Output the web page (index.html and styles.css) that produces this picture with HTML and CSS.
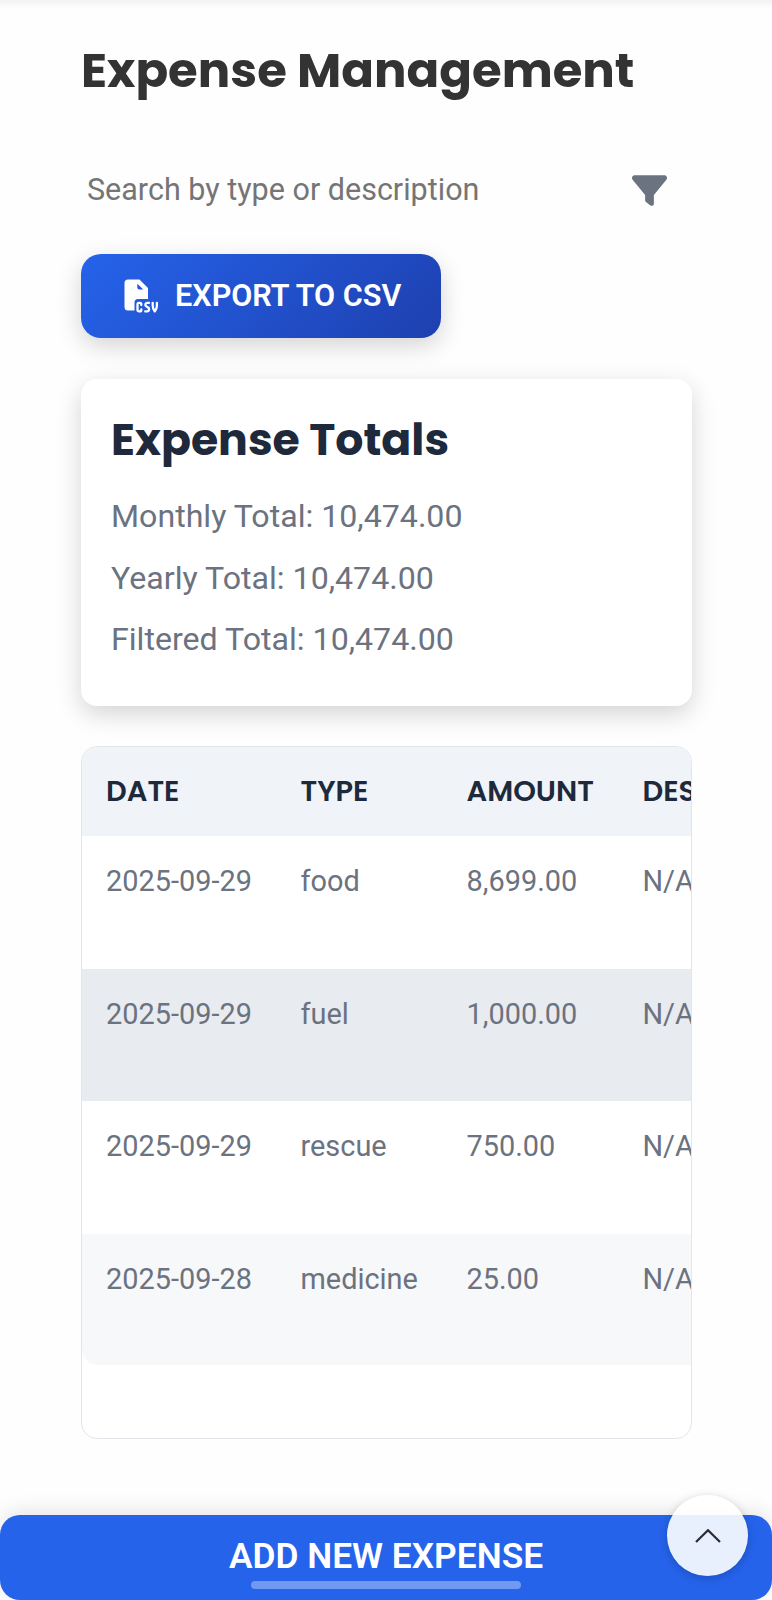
FILE: index.html
```html
<!DOCTYPE html>
<html lang="en">
<head>
<meta charset="utf-8">
<title>Expense Management</title>
<link rel="stylesheet" href="styles.css">
</head>
<body>
<div class="screen">
  <div class="topbar-edge"></div>
  <main class="content">
    <h1 class="title">Expense Management</h1>
    <div class="search">
      <span class="search-hint">Search by type or description</span>
      <svg class="filter-icon" viewBox="0 0 512 512"><path fill="currentColor" d="M3.900 54.900C10.500 40.900 24.500 32 40 32H472c15.500 0 29.500 8.900 36.100 22.900s4.600 30.500-5.200 42.500L320 320.900V448c0 12.100-6.800 23.200-17.700 28.600s-23.800 4.300-33.500-3l-64-48c-8.100-6-12.800-15.500-12.800-25.600V320.900L9 97.300C-.7 85.400-2.800 68.800 3.900 54.900z"/></svg>
    </div>
    <button class="export">
      <svg class="csv-icon" viewBox="0 0 36 34">
        <path fill="#fff" d="M4 .5H15.500L24 9V20H14a3.500 3.500 0 0 0-3.500 3.500V31.500H4A3.500 3.500 0 0 1 .5 28V4A3.500 3.500 0 0 1 4 .5z"/>
        <path fill="#2357dc" d="M13.300 4.800L19.300 10.600H15.300a2 2 0 0 1-2-2z"/>
        <g fill="none" stroke="#fff" stroke-width="2.300" stroke-linecap="round" stroke-linejoin="round">
          <path d="M17.300 26V25.300a1.500 1.500 0 0 0-1.500-1.500h-.8a1.500 1.500 0 0 0-1.500 1.500v5.600a1.500 1.500 0 0 0 1.500 1.500h.8a1.500 1.500 0 0 0 1.500-1.500V30.500"/>
          <path d="M25 23.800H23.100a1.900 1.900 0 0 0-.7 3.600l1.500 1a2.100 2.100 0 0 1-.6 4H21.200"/>
          <path d="M28.700 23.800V26.500c0 2.200.8 4.400 2.100 5.900c1.300-1.500 2.100-3.700 2.100-5.900V23.800"/>
        </g>
      </svg>
      <span>EXPORT TO CSV</span>
    </button>
    <section class="totals">
      <h2 class="totals-title">Expense Totals</h2>
      <p class="total">Monthly Total: 10,474.00</p>
      <p class="total">Yearly Total: 10,474.00</p>
      <p class="total">Filtered Total: 10,474.00</p>
    </section>
    <section class="table-wrap">
      <div class="table">
        <div class="row head"><span>DATE</span><span>TYPE</span><span>AMOUNT</span><span>DESCRIPTION</span></div>
        <div class="row"><span>2025-09-29</span><span>food</span><span>8,699.00</span><span>N/A</span></div>
        <div class="row active"><span>2025-09-29</span><span>fuel</span><span>1,000.00</span><span>N/A</span></div>
        <div class="row"><span>2025-09-29</span><span>rescue</span><span>750.00</span><span>N/A</span></div>
        <div class="row striped"><span>2025-09-28</span><span>medicine</span><span>25.00</span><span>N/A</span></div>
      </div>
    </section>
  </main>
  <button class="add">ADD NEW EXPENSE</button>
  <div class="gesture-bar"></div>
  <div class="to-top">
    <svg viewBox="0 0 26 14"><path d="M1 13L13 1.200L25 13" fill="none" stroke="#2b2d33" stroke-width="2.200"/></svg>
  </div>
</div>
</body>
</html>
```
FILE: styles.css
```css
* { box-sizing: border-box; }
body { margin: 0; background: #fefefe; font-family: Roboto, sans-serif; }
.screen {
  position: relative;
  display: flex;
  flex-direction: column;
  width: 772px;
  height: 1600px;
  overflow: hidden;
}
.topbar-edge { height: 8px; background: linear-gradient(#f2f2f2, #fefefe); }
.content {
  display: flex;
  flex-direction: column;
  align-items: flex-start;
  flex: 1;
  padding: 26px 80px 0 81px;
}
.title {
  margin: 0;
  font: 700 48.2px/72px Poppins, Inter, sans-serif;
  color: #333;
}
.search {
  display: flex;
  align-items: center;
  justify-content: space-between;
  width: 100%;
  height: 60px;
  margin-top: 54px;
  padding: 0 25px 0 6px;
}
.search-hint { font-size: 30.5px; line-height: 40px; color: #757575; }
.filter-icon { width: 35px; height: 35px; color: #6b7280; }
.export {
  display: flex;
  align-items: center;
  gap: 15px;
  width: 360px;
  height: 84px;
  margin-top: 34px;
  padding: 0 0 0 43px;
  border: 0;
  border-radius: 20px;
  background: linear-gradient(135deg, #2563eb, #1e40af);
  box-shadow: 0 8px 24px rgba(0, 0, 0, .17);
  color: #fff;
  font: 600 30.6px/40px Roboto, sans-serif;
  white-space: nowrap;
}
.csv-icon { width: 36px; height: 34px; }
.totals {
  width: 100%;
  height: 327px;
  margin-top: 41px;
  padding: 29px 30px;
  border-radius: 16px;
  background: #fff;
  box-shadow: 0 8px 24px rgba(0, 0, 0, .17);
}
.totals-title {
  margin: 0 0 21px;
  font: 700 44.2px/63px Poppins, Inter, sans-serif;
  color: #1e293b;
}
.total { margin: 0 0 13.500px; font-size: 32.150px; line-height: 48px; color: #6b7280; }
.table-wrap {
  width: 100%;
  height: 693px;
  margin-top: 40px;
  border: 1px solid #e2e5ea;
  border-radius: 16px;
  background: #fff;
  overflow: hidden;
}
.table { width: 820px; border-radius: 16px; overflow: hidden; }
.row {
  display: grid;
  grid-template-columns: 194.5px 166px 176px 1fr;
  height: 132.7px;
  padding-top: 25px;
  font-size: 28.9px;
  line-height: 40px;
  color: #6b7280;
}
.row span { padding-left: 24px; }
.head {
  height: 89px;
  padding-top: 22px;
  background: #f0f4f9;
  font: 600 28.9px/44px Poppins, Inter, sans-serif;
  color: #1e293b;
}
.active { background: #e8ebef; }
.striped { height: 131px; background: #f7f8fa; }
.add {
  flex: none;
  height: 85px;
  padding: 0 0 4px;
  border: 0;
  border-radius: 20px;
  background: #2563eb;
  box-shadow: 0 -4px 20px rgba(0, 0, 0, .1);
  color: #fff;
  font: 600 35.3px/44px Roboto, sans-serif;
}
.gesture-bar {
  position: absolute;
  left: 251px;
  top: 1581px;
  width: 270px;
  height: 8px;
  border-radius: 4px;
  background: rgba(255, 255, 255, .35);
}
.to-top {
  position: absolute;
  left: 667px;
  top: 1495px;
  display: flex;
  align-items: center;
  justify-content: center;
  width: 81px;
  height: 81px;
  border-radius: 50%;
  background: rgba(255, 255, 255, .9);
  box-shadow: 0 2px 10px rgba(0, 0, 0, .2);
}
.to-top svg { width: 26px; height: 14px; }
```
